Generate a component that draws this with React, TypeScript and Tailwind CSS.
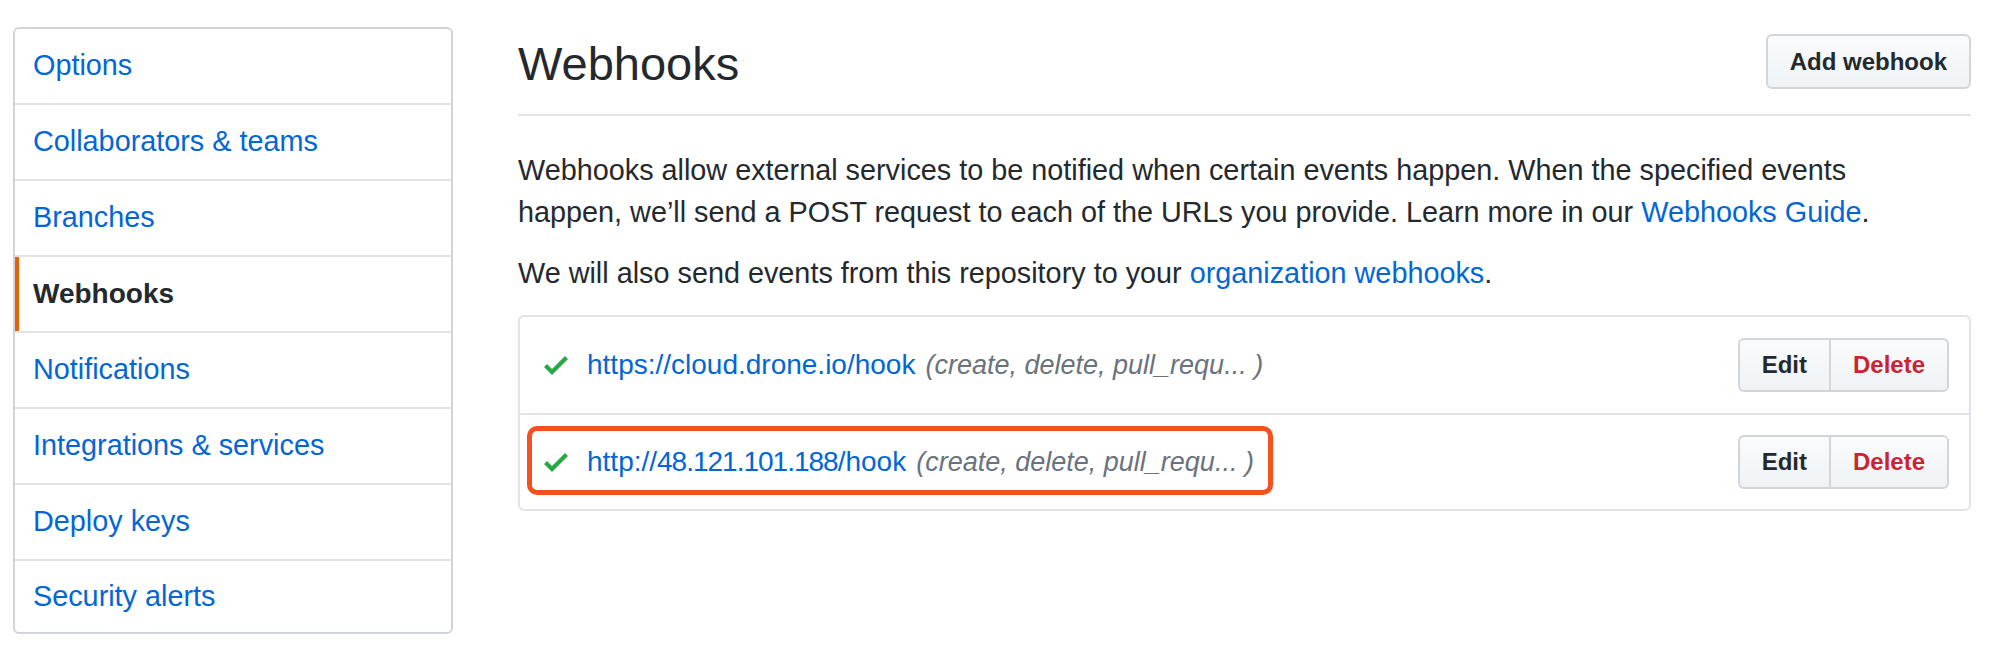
const items = [
  "Options",
  "Collaborators & teams",
  "Branches",
  "Webhooks",
  "Notifications",
  "Integrations & services",
  "Deploy keys",
  "Security alerts",
];

function Check() {
  return (
    <svg width="24" height="32" viewBox="0 0 12 16" className="shrink-0" aria-hidden="true">
      <path fill="#28a745" d="M12 5l-8 8-4-4 1.5-1.5L4 10l6.5-6.5L12 5z" />
    </svg>
  );
}

function HookRow({ children, last, highlight }: { children: React.ReactNode; last?: boolean; highlight?: boolean }) {
  return (
    <div
      className={
        "relative flex items-center justify-between pl-[24px] pr-[20px] " +
        (last ? "h-[94px]" : "h-[98px] border-b-2 border-[#e1e4e8]")
      }
    >
      <div className="flex items-center text-[28px]">
        <Check />
        <a className="ml-[19px] text-[#0366d6]">{children}</a>
        <span className="ml-[10px] italic text-[27px] text-[#6a737d]">(create, delete, pull_requ... )</span>
      </div>
      <div className="flex h-[54px] rounded-[6px] border-2 border-[#d3d5d7] overflow-hidden bg-linear-to-b from-[#fafbfc] to-[#eff3f6] text-[24px] font-bold">
        <button className="px-[22px] text-[#24292e]">Edit</button>
        <button className="px-[22px] border-l-2 border-[#d3d5d7] text-[#cb2431]">Delete</button>
      </div>
      {highlight && (
        <div className="absolute left-[7px] top-[11px] w-[746px] h-[69px] border-[5px] border-[#f4511e] rounded-[10px] pointer-events-none" />
      )}
    </div>
  );
}

export default function App() {
  return (
    <div className="w-[1992px] min-h-[656px] bg-white font-['Liberation_Sans',Arial,sans-serif] text-[#24292e] flex items-start pl-[13px] pt-[27px]">
      <nav className="w-[440px] shrink-0 border-2 border-[#d1d5da] rounded-[6px] bg-white overflow-hidden">
        {items.map((it, i) => {
          const last = i === items.length - 1;
          const selected = it === "Webhooks";
          return (
            <div
              key={it}
              className={
                "relative flex items-center pl-[18px] text-[28.8px] " +
                (last ? "h-[71px]" : "h-[76px] border-b-2 border-[#e1e4e8]")
              }
            >
              {selected && <span className="absolute left-0 top-0 bottom-0 w-[4px] bg-[#e36209]" />}
              <span className={selected ? "font-bold text-[#24292e] text-[28px]" : "text-[#0366d6]"}>{it}</span>
            </div>
          );
        })}
      </nav>

      <main className="ml-[65px] w-[1453px]">
        <div className="flex items-start justify-between h-[89px] border-b-2 border-[#e1e4e8]">
          <h1 className="mt-[13px] text-[47px] leading-none font-normal">Webhooks</h1>
          <button className="mt-[7px] h-[55px] px-[22px] flex items-center rounded-[6px] border-2 border-[#d3d5d7] bg-linear-to-b from-[#fafbfc] to-[#eff3f6] text-[24px] font-bold text-[#24292e]">
            Add webhook
          </button>
        </div>

        <p className="mt-[33px] text-[28.8px] leading-[42px]">
          Webhooks allow external services to be notified when certain events happen. When the specified events
          <br />
          happen, we’ll send a POST request to each of the URLs you provide. Learn more in our{" "}
          <a className="text-[#0366d6]">Webhooks Guide</a>.
        </p>
        <p className="mt-[19px] text-[28.8px] leading-[42px]">
          We will also send events from this repository to your <a className="text-[#0366d6]">organization webhooks</a>.
        </p>

        <div className="mt-[21px] border-2 border-[#e1e4e8] rounded-[6px]">
          <HookRow>https://cloud.drone.io/hook</HookRow>
          <HookRow last highlight>
            http://<span className="tracking-[-1px]">48.121.101.188</span>/hook
          </HookRow>
        </div>
      </main>
    </div>
  );
}
